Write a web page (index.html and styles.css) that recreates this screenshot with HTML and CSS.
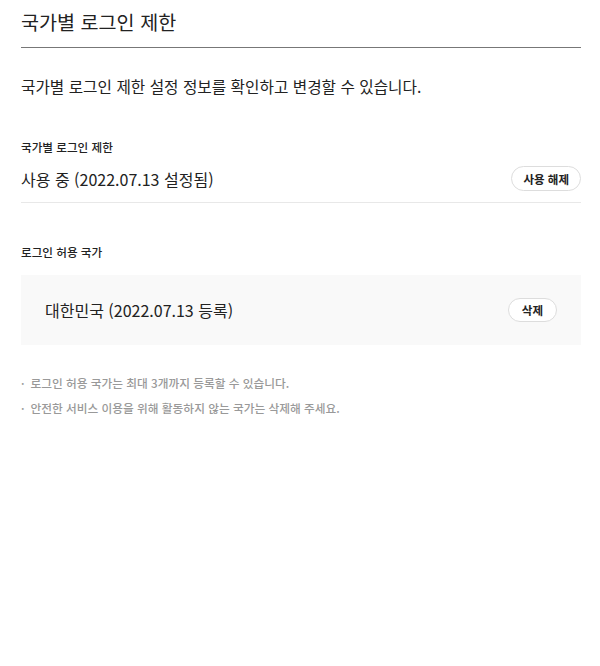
FILE: index.html
```html
<!DOCTYPE html>
<html lang="ko">
  <head>
    <meta charset="utf-8" />
    <title>국가별 로그인 제한</title>
    <meta name="viewport" content="width=device-width, initial-scale=1.0" />
    <link rel="stylesheet" href="styles.css">
  </head>
  <body>
    <div class="page">
      <h2 class="page-title">국가별 로그인 제한</h2>
      <p class="page-desc">국가별 로그인 제한 설정 정보를 확인하고 변경할 수 있습니다.</p>

      <div class="section">
        <h3 class="section-label">국가별 로그인 제한</h3>
        <div class="status-row">
          <span class="status-text">사용 중 (2022.07.13 설정됨)</span>
          <button class="pill-button">사용 해제</button>
        </div>
      </div>

      <div class="section">
        <h3 class="section-label">로그인 허용 국가</h3>
        <div class="country-box">
          <span class="country-name">대한민국 (2022.07.13 등록)</span>
          <button class="pill-button">삭제</button>
        </div>
      </div>

      <ul class="notes">
        <li>로그인 허용 국가는 최대 3개까지 등록할 수 있습니다.</li>
        <li>안전한 서비스 이용을 위해 활동하지 않는 국가는 삭제해 주세요.</li>
      </ul>
    </div>
  </body>
</html>
```

FILE: styles.css
```css
body {
  margin: 0;
  background: #fff;
  color: #222;
  font-family: "Noto Sans CJK KR", "Noto Sans", sans-serif;
}
.page {
  padding: 0 19px 0 21px;
}
.page-title {
  margin: 0;
  padding: 8px 0 11px;
  font-size: 19.6px;
  font-weight: 400;
  line-height: 28px;
  border-bottom: 1px solid #777;
}
.page-desc {
  margin: 0;
  padding-top: 28px;
  font-size: 15.7px;
  line-height: 22px;
}
.section {
  margin-top: 41px;
}
.section + .section {
  margin-top: 41px;
}
.section-label {
  margin: 0;
  font-size: 11.6px;
  font-weight: 500;
  line-height: 16px;
}
/* status row with divider */
.status-row {
  display: flex;
  align-items: center;
  justify-content: space-between;
  padding: 11px 0 11px;
  border-bottom: 1px solid #e8e8e8;
}
.status-text {
  font-size: 16px;
}
.pill-button {
  padding: 0 11px;
  height: 25px;
  background: #fff;
  border: 1px solid #ddd;
  border-radius: 13px;
  color: #222;
  font-family: inherit;
  font-size: 11.5px;
  font-weight: 700;
}
.country-box {
  display: flex;
  align-items: center;
  justify-content: space-between;
  margin-top: 15px;
  height: 70px;
  padding: 0 24px;
  background: #f9f9f9;
}
.country-box .pill-button {
  padding: 0 13px;
  height: 24px;
}
.country-name {
  font-size: 16px;
}
.notes {
  margin: 25px 0 0;
  padding: 0;
  list-style: none;
  font-size: 11.7px;
  color: #999;
  font-weight: 500;
}
.notes li {
  line-height: 25px;
}
.notes li::before {
  content: "·";
  margin-right: 6px;
}
```
